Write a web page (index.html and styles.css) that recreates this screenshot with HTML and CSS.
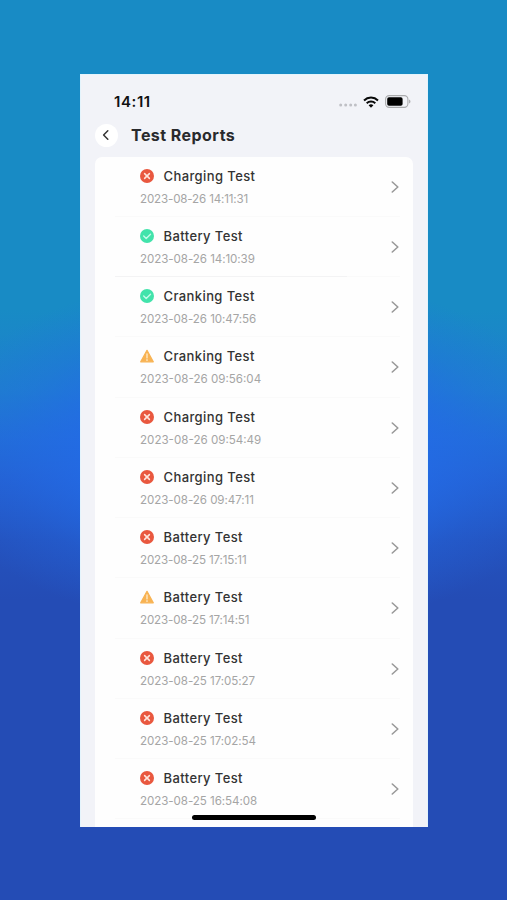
FILE: index.html
```html
<!DOCTYPE html>
<html lang="en">
<head>
<meta charset="utf-8">
<title>Test Reports</title>
<link rel="stylesheet" href="styles.css">
</head>
<body>
<svg class="defs" width="0" height="0" aria-hidden="true">
  <symbol id="fail" viewBox="0 0 14 14"><circle cx="7" cy="7" r="7" fill="#e9583f"/><path d="M4.6 4.6l4.8 4.8M9.4 4.6L4.6 9.4" stroke="#ffe5dc" stroke-width="1.5" stroke-linecap="round"/></symbol>
  <symbol id="pass" viewBox="0 0 14 14"><circle cx="7" cy="7" r="7" fill="#42e3ab"/><path d="M3.7 7l2.5 2.4 4.3-4.2" fill="none" stroke="#c4fbe9" stroke-width="1.4" stroke-linecap="round" stroke-linejoin="round"/></symbol>
  <symbol id="warn" viewBox="0 0 14 14"><path d="M7 1.3L13.3 12.8H.7z" fill="#f8b353" stroke="#f8b353" stroke-width="1.2" stroke-linejoin="round"/><path d="M7 4.8v4.1M7 10.6v.8" stroke="#fff0d8" stroke-width="1.2" stroke-linecap="round"/></symbol>
  <symbol id="next" viewBox="0 0 8 12"><path d="M1.3 1l5.5 5-5.5 5" fill="none" stroke="#999" stroke-width="1.6" stroke-linecap="round" stroke-linejoin="round"/></symbol>
</svg>
<main class="phone">
  <div class="status">
    <span class="time">14:11</span>
    <svg class="signal" viewBox="0 0 18 4"><g fill="#bfc0c5"><circle cx="1.7" cy="2" r="1.5"/><circle cx="6.7" cy="2" r="1.5"/><circle cx="11.7" cy="2" r="1.5"/><circle cx="16.4" cy="2" r="1.5"/></g></svg>
    <svg class="wifi" viewBox="0 0 16 12"><g fill="none" stroke="#080808" stroke-width="2"><path d="M1 4.4a10.2 10.2 0 0 1 14 0"/><path d="M3.7 7.3a6.3 6.3 0 0 1 8.6 0"/></g><path d="M5.6 9.3a3.5 3.5 0 0 1 4.8 0L8 11.8z" fill="#080808"/></svg>
    <svg class="battery" viewBox="0 0 26 13"><rect x=".6" y=".6" width="22.3" height="11.8" rx="3.6" fill="none" stroke="#aaabad" stroke-width="1.1"/><rect x="2.2" y="2.2" width="15.4" height="8.6" rx="1.8"/><path d="M24.1 4.5c1.8.7 1.8 3.3 0 4z" fill="#a7a7aa"/></svg>
  </div>
  <header class="header">
    <span class="back"><svg viewBox="0 0 8 12"><path d="M5.8 1.8L1.6 6l4.2 4.2" fill="none" stroke="#333" stroke-width="1.5" stroke-linecap="round" stroke-linejoin="round"/></svg></span>
    <h1>Test Reports</h1>
  </header>
  <section class="list">
    <article class="row"><div><h2><svg class="icon"><use href="#fail"/></svg><span>Charging Test</span></h2><time class="tight">2023-08-26 14:11:31</time></div><svg class="next"><use href="#next"/></svg></article>
    <article class="row strong"><div><h2><svg class="icon"><use href="#pass"/></svg><span>Battery Test</span></h2><time>2023-08-26 14:10:39</time></div><svg class="next"><use href="#next"/></svg></article>
    <article class="row"><div><h2><svg class="icon"><use href="#pass"/></svg><span>Cranking Test</span></h2><time>2023-08-26 10:47:56</time></div><svg class="next"><use href="#next"/></svg></article>
    <article class="row"><div><h2><svg class="icon"><use href="#warn"/></svg><span>Cranking Test</span></h2><time class="wide">2023-08-26 09:56:04</time></div><svg class="next"><use href="#next"/></svg></article>
    <article class="row"><div><h2><svg class="icon"><use href="#fail"/></svg><span>Charging Test</span></h2><time class="wide">2023-08-26 09:54:49</time></div><svg class="next"><use href="#next"/></svg></article>
    <article class="row"><div><h2><svg class="icon"><use href="#fail"/></svg><span>Charging Test</span></h2><time>2023-08-26 09:47:11</time></div><svg class="next"><use href="#next"/></svg></article>
    <article class="row"><div><h2><svg class="icon"><use href="#fail"/></svg><span>Battery Test</span></h2><time class="tight">2023-08-25 17:15:11</time></div><svg class="next"><use href="#next"/></svg></article>
    <article class="row"><div><h2><svg class="icon"><use href="#warn"/></svg><span>Battery Test</span></h2><time class="tight">2023-08-25 17:14:51</time></div><svg class="next"><use href="#next"/></svg></article>
    <article class="row"><div><h2><svg class="icon"><use href="#fail"/></svg><span>Battery Test</span></h2><time>2023-08-25 17:05:27</time></div><svg class="next"><use href="#next"/></svg></article>
    <article class="row"><div><h2><svg class="icon"><use href="#fail"/></svg><span>Battery Test</span></h2><time>2023-08-25 17:02:54</time></div><svg class="next"><use href="#next"/></svg></article>
    <article class="row"><div><h2><svg class="icon"><use href="#fail"/></svg><span>Battery Test</span></h2><time>2023-08-25 16:54:08</time></div><svg class="next"><use href="#next"/></svg></article>
  </section>
  <div class="home"></div>
</main>
</body>
</html>
```
FILE: styles.css
```css
* { box-sizing: border-box; }
body {
  margin: 0;
  height: 900px;
  padding: 74px 79px 73px 80px;
  overflow: hidden;
  font-family: Inter, "Open Sans", sans-serif;
  background:
    radial-gradient(ellipse 330px 180px at 254px 452px, #236be7 0, #236be7d0 50%, #236be74d 76%, #236be700 100%),
    linear-gradient(180deg, #188bc5 0, #188bc5 310px, #1e7fcd 390px, #226dd5 440px, #2460d0 480px, #2452bd 540px, #244cb5 600px, #244cb5 100%);
}
.defs { position: absolute; }
.phone {
  position: relative;
  height: 753px;
  padding: 0 14px 0 13.5px;
  overflow: hidden;
  background: #f2f3f8;
  border: 1px solid #e4f4fc;
  border-width: 1px 1px 0;
}
.status { display: flex; align-items: center; height: 46px; padding: 7px 2px 0 19.5px; }
.time { margin-right: auto; font-size: 15px; font-weight: 600; line-height: 20px; letter-spacing: .6px; color: #111; }
.signal { width: 18px; height: 4px; margin: 7px 6px 0 0; }
.wifi { width: 16px; height: 12px; margin-right: 6px; }
.battery { width: 26px; height: 13px; }
.header { display: flex; align-items: center; height: 35.5px; padding-bottom: 7px; }
.back { display: grid; place-items: center; width: 23px; height: 23px; border-radius: 50%; background: #fff; }
.back svg { width: 8px; height: 12px; }
h1 { margin: 0 0 0 13.5px; font-size: 16px; font-weight: 700; line-height: 22px; letter-spacing: .45px; color: #292a2d; }
.list { height: 680px; border-radius: 7px 7px 0 0; background: #fefefe; }
.row {
  display: flex;
  align-items: center;
  justify-content: space-between;
  height: 60.25px;
  padding: 0 14.5px 0 45.5px;
  background: linear-gradient(#fafafa, #fafafa) 20px 100% / 285px 1px no-repeat;
}
.row.strong { background-image: linear-gradient(90deg, #f3f3f4 232px, #fafafa 232px); }
h2 { display: flex; align-items: center; gap: 9.5px; margin: 0; font-size: 13px; font-weight: 500; line-height: 20px; letter-spacing: .4px; color: #333; }
.icon { width: 14px; height: 14px; }
time { display: block; margin-top: 4px; font-size: 11.6px; line-height: 18px; letter-spacing: -.07px; color: #a5a5a5; }
time.tight { letter-spacing: -.16px; }
time.wide { letter-spacing: 0; }
.next { width: 8px; height: 12px; }
.home { position: absolute; left: 111px; bottom: 7px; width: 124px; height: 5px; border-radius: 3px; background: #000; }
```
